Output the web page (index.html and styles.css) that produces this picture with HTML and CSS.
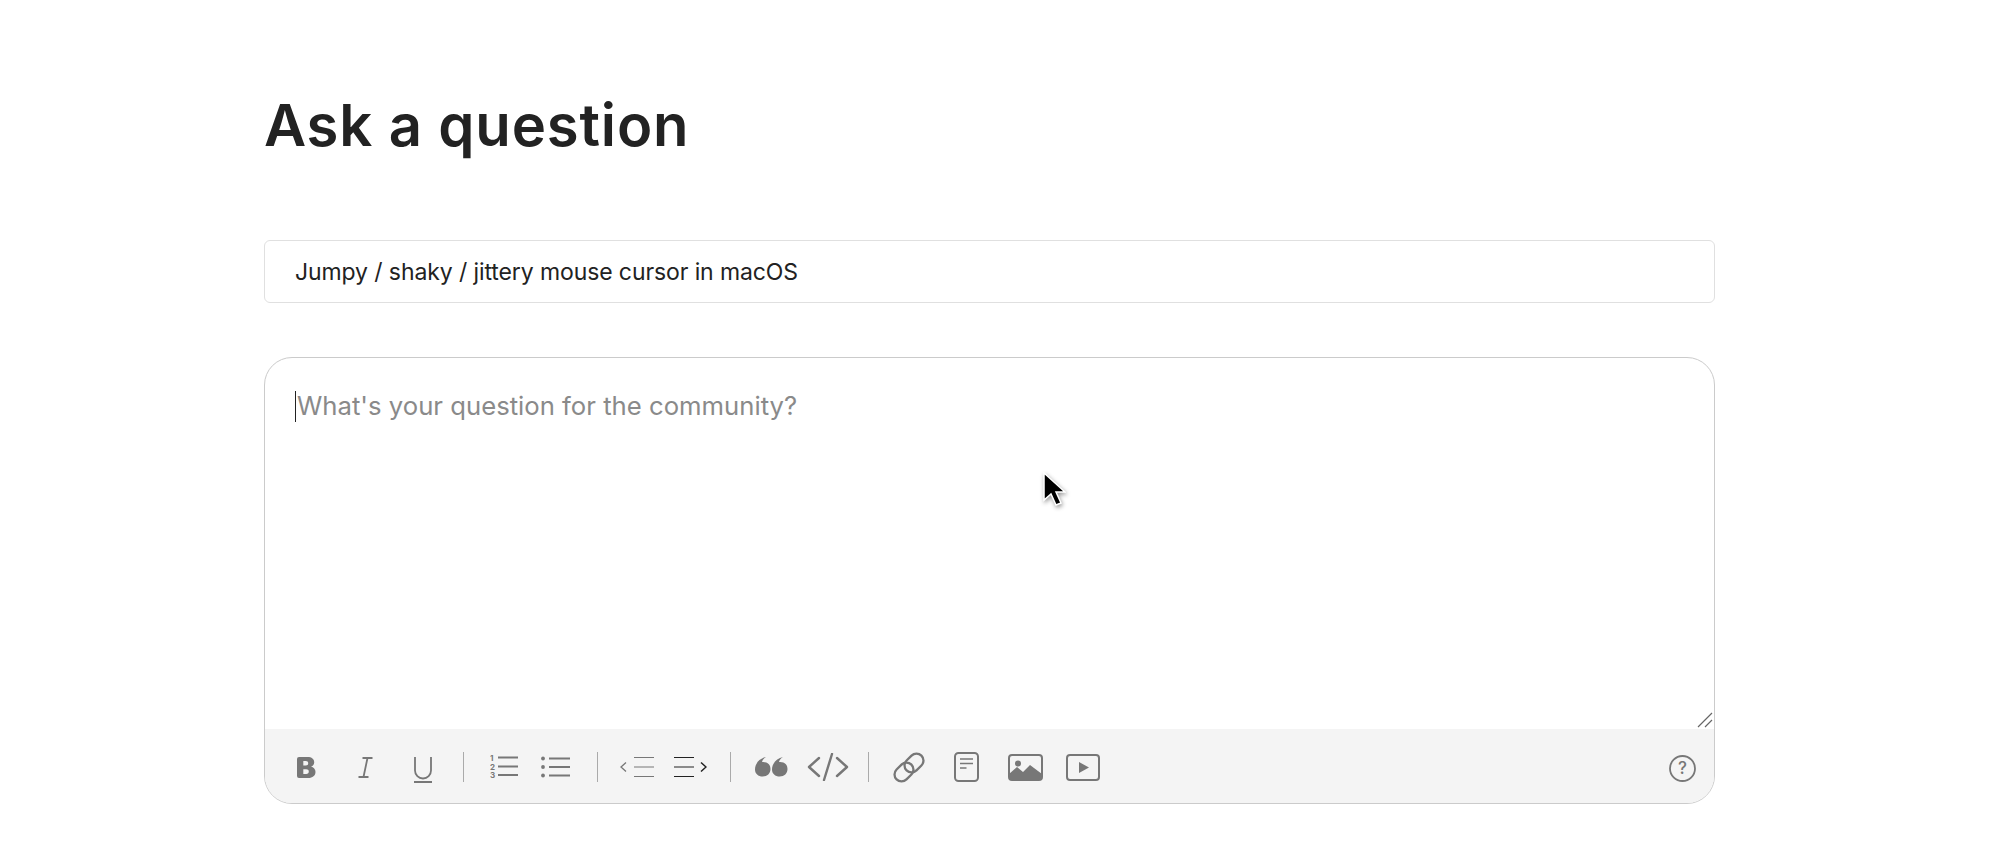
FILE: index.html
```html
<!DOCTYPE html>
<html lang="en">
<head>
<meta charset="utf-8">
<title>Ask a question</title>
<link rel="stylesheet" href="styles.css">
</head>
<body>
<main class="page">
  <h1 class="title">Ask a question</h1>
  <div class="subject">Jumpy / shaky / jittery mouse cursor in macOS</div>
  <section class="editor">
    <div class="body">
      <span class="caret"></span><span class="placeholder">What's your question for the community?</span>
      <svg class="grip" width="16" height="16" viewBox="0 0 16 16"><path d="M1 15 15 1M8 15l7-7" fill="none" stroke="#666" stroke-width="1.200"/></svg>
    </div>
    <div class="toolbar">
      <svg class="t-b" width="19" height="21" viewBox="0 0 19 21"><path fill="#777" fill-rule="evenodd" d="M2 0h8.500c4.300 0 6.700 2 6.700 5.200 0 2.200-1.200 3.800-3.100 4.500 2.500.5 4.400 2.300 4.400 5 0 3.900-2.900 6.300-7.300 6.300H2a2 2 0 0 1-2-2V2a2 2 0 0 1 2-2Zm4.300 4.100v4.400h2.600c1.500 0 2.300-.8 2.300-2.200s-.9-2.200-2.300-2.200Zm0 8.200v4.600h3c1.600 0 2.500-.8 2.500-2.300s-1-2.300-2.600-2.300Z"/></svg>
      <svg class="t-i" width="15" height="21" viewBox="0 0 15 21"><path d="M4.500 1H14.500M.5 20H10.500M9.500 1 5.500 20" fill="none" stroke="#777" stroke-width="1.800"/></svg>
      <svg class="t-u" width="18" height="26" viewBox="0 0 18 26"><path d="M1 0V13.500a8 8 0 0 0 16 0V0" fill="none" stroke="#777" stroke-width="1.800"/><path d="M0 25H18" stroke="#777" stroke-width="2"/></svg>
      <span class="sep s-1"></span>
      <svg class="t-ol" width="29" height="26" viewBox="0 0 29 26"><g stroke="#777" stroke-width="2"><path d="M8 3.500H28M8 12.500H28M8 21H28"/></g><text class="mini" x="0" y="7">1</text><text class="mini" x="0" y="15.500">2</text><text class="mini" x="0" y="24">3</text></svg>
      <svg class="t-ul" width="29" height="22" viewBox="0 0 29 22"><g stroke="#777" stroke-width="2"><path d="M8 2.500H29M8 11H29M8 19.500H29"/></g><g fill="#777"><circle cx="2" cy="2.500" r="1.900"/><circle cx="2" cy="11" r="1.900"/><circle cx="2" cy="19.500" r="1.900"/></g></svg>
      <span class="sep s-2"></span>
      <svg class="t-out" width="34" height="22" viewBox="0 0 34 22"><path d="M6 6.500 1 11l5 4.500" fill="none" stroke="#777" stroke-width="1.300"/><path d="M14 1.500H34M14 11H34M14 20.500H34" stroke="#777" stroke-width="1"/></svg>
      <svg class="t-ind" width="33" height="22" viewBox="0 0 33 22"><path d="M0 1.500H20M0 11H20M0 20.500H20" stroke="#222" stroke-width="1"/><path d="M27 6.500 32 11l-5 4.500" fill="none" stroke="#222" stroke-width="1.500"/></svg>
      <span class="sep s-3"></span>
      <svg class="t-q" width="33" height="20" viewBox="0 0 33 20"><g fill="#777"><path d="M0 12.500C0 6.500 4.500 1.500 11 0c-2.200 1.400-3.500 3-4 5 5.500-.5 8.500 2.600 8.500 7 0 4.500-3.200 7.500-7.800 7.500C3.200 19.500 0 16.800 0 12.500Z"/><path d="M17 12.500C17 6.500 21.500 1.500 28 0c-2.200 1.400-3.500 3-4 5 5.500-.5 8.500 2.600 8.500 7 0 4.500-3.200 7.500-7.800 7.500-4.500 0-7.700-2.700-7.700-7Z"/></g></svg>
      <svg class="t-c" width="42" height="28" viewBox="0 0 42 28"><path d="M12 5 2 14l10 9M30 5l10 9-10 9M25 1 17 27" fill="none" stroke="#777" stroke-width="2.400" stroke-linecap="round" stroke-linejoin="round"/></svg>
      <span class="sep s-4"></span>
      <svg class="t-l" width="32" height="31" viewBox="0 0 32 31"><g fill="none" stroke="#777" stroke-width="2.300"><rect x="-10.500" y="-7" width="21" height="14" rx="7" transform="translate(11 20) rotate(-45)"/><rect x="-10.500" y="-7" width="21" height="14" rx="7" transform="translate(21 11) rotate(-45)"/></g></svg>
      <svg class="t-d" width="25" height="30" viewBox="0 0 25 30"><rect x="1" y="1" width="23" height="28" rx="3.500" fill="none" stroke="#777" stroke-width="2"/><path d="M6 7H19M6 11.500H19M6 16H12.500" stroke="#777" stroke-width="1.500"/></svg>
      <svg class="t-im" width="35" height="27" viewBox="0 0 35 27"><rect x="1" y="1" width="33" height="25" rx="3" fill="none" stroke="#777" stroke-width="2"/><path fill="#777" d="M1 26v-6l8-7 6 5 7-7 12 9v6Z"/><circle cx="10" cy="9.500" r="3" fill="#777"/></svg>
      <svg class="t-v" width="34" height="27" viewBox="0 0 34 27"><rect x="1" y="1" width="32" height="25" rx="3" fill="none" stroke="#777" stroke-width="2"/><path fill="#777" d="M13 8v11l10-5.500Z"/></svg>
      <svg class="t-h" width="27" height="27" viewBox="0 0 27 27"><circle cx="13.500" cy="13.500" r="12.500" fill="none" stroke="#777" stroke-width="1.800"/><text class="qm" x="13.500" y="19">?</text></svg>
    </div>
  </section>
</main>
<svg class="pointer" width="24" height="38" viewBox="0 0 24 38"><path d="M2 1V28l7-6 5 11 5-2-5-11h9Z" fill="#000" stroke="#fff" stroke-width="1.500"/></svg>
</body>
</html>
```

FILE: styles.css
```css
* { box-sizing: border-box; }
html, body { margin: 0; height: 100%; background: #fff; overflow: hidden; }
body { font-family: Inter, "Liberation Sans", sans-serif; color: #222; }
.page { width: 1451px; margin-left: 264px; padding-top: 89px; }
.title { margin: 0 0 78px; font-size: 58px; line-height: 73px; font-weight: 600; letter-spacing: .85px; color: #222; }
.subject { height: 63px; padding-left: 30px; border: 1px solid #e0e0e0; border-radius: 6px; font-size: 23px; letter-spacing: -.1px; line-height: 63px; color: #222; }
.editor { margin-top: 54px; height: 447px; border: 1.500px solid #cbcbcb; border-radius: 28px; overflow: hidden; display: flex; flex-direction: column; }
.body { flex: 1; position: relative; padding: 32px 0 0 30px; display: flex; align-items: flex-start; }
.caret { width: 1px; height: 31px; margin-top: 1px; background: #222; margin-right: 1px; }
.placeholder { font-size: 25.700px; line-height: 31px; color: #8a8a8a; }
.grip { position: absolute; right: 1px; bottom: 1px; }
.toolbar { height: 74px; background: #f4f4f4; display: flex; align-items: center; padding: 2px 0 0 32px; flex: none; }
.toolbar svg { flex: none; display: block; }
.sep { flex: none; width: 1px; height: 30px; background: #aaa; }
.mini { font: 700 8px Inter, "Liberation Sans", sans-serif; fill: #777; }
.qm { font: 500 17px Inter, "Liberation Sans", sans-serif; fill: #777; text-anchor: middle; }
.t-i { margin-left: 42px; }
.t-u { margin-left: 41px; margin-top: 5px; }
.s-1 { margin-left: 31px; }
.t-ol { margin-left: 26px; }
.t-ul { margin-left: 22px; }
.s-2 { margin-left: 27px; }
.t-out { margin-left: 22px; }
.t-ind { margin-left: 20px; }
.s-3 { margin-left: 23px; }
.t-q { margin-left: 24px; }
.t-c { margin-left: 19px; }
.s-4 { margin-left: 19px; }
.t-l { margin-left: 24px; }
.t-d { margin-left: 29px; }
.t-im { margin-left: 29px; }
.t-v { margin-left: 23px; }
.t-h { margin-left: auto; margin-right: 18px; margin-top: 2px; }
.pointer { position: absolute; left: 1042px; top: 472px; filter: drop-shadow(1px 2px 2px rgba(0,0,0,.4)); }
```
